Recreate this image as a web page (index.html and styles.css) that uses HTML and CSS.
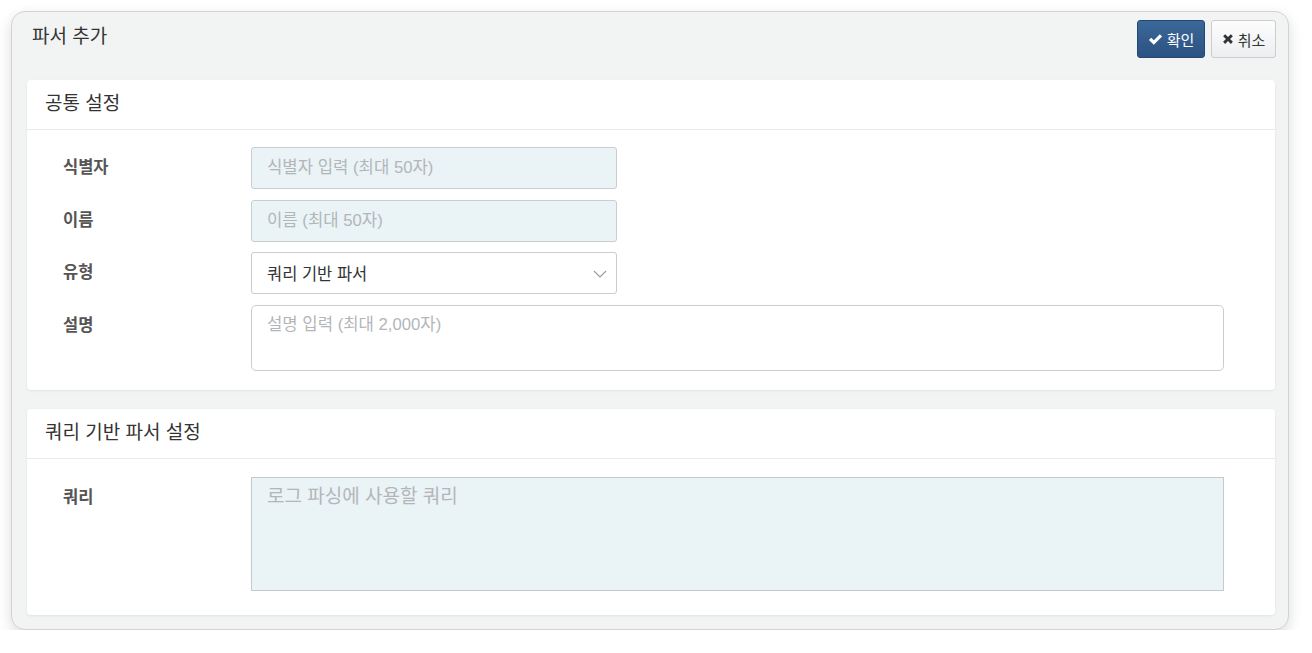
FILE: index.html
```html
<!DOCTYPE html>
<html lang="ko">
<head>
<meta charset="utf-8">
<title>파서 추가</title>
<link rel="stylesheet" href="styles.css">
</head>
<body>
<div class="panel">
  <div class="panel-head">
    <h1 class="title">파서 추가</h1>
    <div class="actions">
      <button class="btn btn-primary" type="button">
        <svg class="ico" viewBox="0 0 16 16" width="15" height="15"><path d="M1 8.4 L3.4 6 L6.2 8.8 L12.6 2.4 L15 4.8 L6.2 13.6 Z" fill="#fff"/></svg>
        <span>확인</span>
      </button>
      <button class="btn btn-default" type="button">
        <svg class="ico" viewBox="0 0 16 16" width="12" height="12"><path d="M1.5 4.2 L4.2 1.5 L8 5.3 L11.8 1.5 L14.5 4.2 L10.7 8 L14.5 11.8 L11.8 14.5 L8 10.7 L4.2 14.5 L1.5 11.8 L5.3 8 Z" fill="#333"/></svg>
        <span>취소</span>
      </button>
    </div>
  </div>

  <section class="card">
    <div class="card-head">공통 설정</div>
    <div class="card-body">
      <div class="row">
        <label class="label">식별자</label>
        <input class="field field-short field-tint" type="text" placeholder="식별자 입력 (최대 50자)">
      </div>
      <div class="row">
        <label class="label">이름</label>
        <input class="field field-short field-tint" type="text" placeholder="이름 (최대 50자)">
      </div>
      <div class="row">
        <label class="label">유형</label>
        <div class="select field-short">
          <span>쿼리 기반 파서</span>
          <svg class="chev" viewBox="0 0 14 8" width="14" height="8"><path d="M1 1 L7 7 L13 1" fill="none" stroke="#999" stroke-width="1.1"/></svg>
        </div>
      </div>
      <div class="row">
        <label class="label">설명</label>
        <textarea class="field area-desc" placeholder="설명 입력 (최대 2,000자)"></textarea>
      </div>
    </div>
  </section>

  <section class="card">
    <div class="card-head">쿼리 기반 파서 설정</div>
    <div class="card-body card-body-2">
      <div class="row">
        <label class="label">쿼리</label>
        <textarea class="field area-query" placeholder="로그 파싱에 사용할 쿼리"></textarea>
      </div>
    </div>
  </section>
</div>
</body>
</html>
```

FILE: styles.css
```css
* { box-sizing: border-box; }
html, body { margin: 0; padding: 0; background: #fff; }
body {
  font-family: "Liberation Sans", "Noto Sans CJK KR", sans-serif;
  color: #333;
  padding: 11px 0 0 11px;
}
.panel {
  width: 1278px;
  height: 619px;
  background: #f2f3f3;
  border: 1px solid #d2d4d4;
  border-radius: 14px;
  box-shadow: 0 5px 14px rgba(0,0,0,0.14);
  padding: 8px 13px 14px 15px;
}
.panel-head {
  display: flex;
  justify-content: space-between;
  align-items: flex-start;
  height: 38px;
  margin: 0 -1px 22px 0;
}
.title {
  margin: 0;
  padding: 4px 0 0 5px;
  font-size: 19px;
  font-weight: normal;
  color: #333;
  line-height: 26px;
}
.actions { display: flex; gap: 6px; }
.btn {
  display: flex;
  align-items: center;
  justify-content: center;
  gap: 4px;
  height: 38px;
  padding: 0;
  font-family: inherit;
  font-size: 15px;
  border-radius: 3px;
  white-space: nowrap;
  cursor: pointer;
}
.btn-primary {
  width: 68px;
  color: #fff;
  background: linear-gradient(#3b6898, #2b5283);
  border: 1px solid #234877;
}
.btn-default {
  width: 65px;
  color: #333;
  background: linear-gradient(#fdfdfd, #eceef0);
  border: 1px solid #cbcdcf;
}
.ico { flex: none; }
.card {
  background: #fff;
  border-radius: 4px;
  box-shadow: 0 1px 3px rgba(0,0,0,0.07);
  margin-bottom: 19px;
}
.card:last-child { margin-bottom: 0; }
.card-head {
  height: 50px;
  border-bottom: 1px solid #e8e9e9;
  padding: 0 18px;
  font-size: 19px;
  line-height: 48px;
  color: #333;
}
.card-body {
  padding: 17px 51px 19px 36px;
  display: flex;
  flex-direction: column;
  gap: 10.67px;
}
.card-body-2 { padding-top: 18px; padding-bottom: 24px; }
.row { display: flex; align-items: flex-start; }
.label {
  width: 188px;
  flex: none;
  font-size: 16.5px;
  font-weight: bold;
  color: #555;
  line-height: 41px;
}
.field {
  font-family: inherit;
  font-size: 16.7px;
  color: #333;
  border: 1px solid #ccc;
  border-radius: 3px;
  background: #fff;
  padding: 0 15px;
  outline: none;
}
.field::placeholder { color: #b3b6b9; }
.field-short { width: 366px; height: 42px; }
.field-tint { background: #eaf3f6; border-color: #c9cdd0; }
.select {
  display: flex;
  align-items: center;
  justify-content: space-between;
  border: 1px solid #ccc;
  border-radius: 3px;
  background: #fff;
  padding: 0 9px 0 15px;
  font-size: 16.5px;
  color: #333;
}
.chev { margin-top: 1px; }
textarea.field { resize: none; padding-top: 7px; line-height: 24px; }
.area-desc { flex: 1; height: 66px; border-radius: 5px; }
.area-query {
  flex: 1;
  height: 114px;
  border-radius: 0;
  background: #eaf3f5;
  border-color: #c5cacd;
  font-size: 19px;
  padding-top: 4px;
}
```
